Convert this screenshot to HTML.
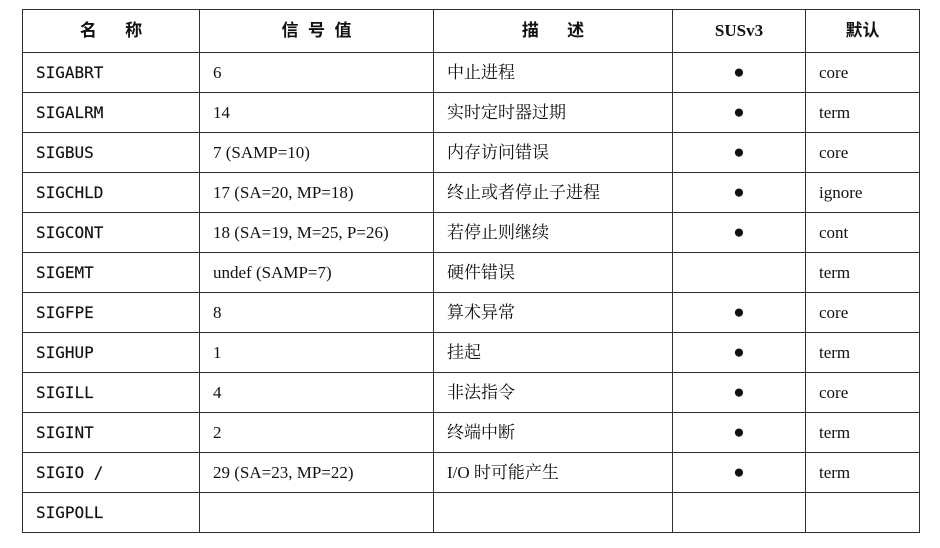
<!DOCTYPE html>
<html><head><meta charset="utf-8"><style>
html,body{margin:0;padding:0;background:#fff;width:940px;height:548px;overflow:hidden}
table{position:absolute;left:22px;top:9px;border-collapse:collapse;table-layout:fixed}
td,th{border:1.5px solid #2e2e2e;height:39px;padding:0 0 0 13px;color:#111;font-size:17px;line-height:20px;white-space:nowrap;overflow:hidden;vertical-align:middle}
th{height:42px;padding:0;text-align:center;font-family:"Liberation Sans","Noto Sans CJK SC",sans-serif;font-weight:bold;font-size:17px}
th.s{font-family:"Liberation Serif",serif}
td.n{font-family:"DejaVu Sans Mono","Liberation Mono",monospace;font-size:16px;-webkit-text-stroke:0.15px #111}
td.v,td.d{font-family:"Liberation Serif","Noto Serif CJK SC",serif}
td.c{text-align:center;padding:0;font-size:19px}
</style></head><body>
<table>
<colgroup><col style="width:177px"><col style="width:234px"><col style="width:239px"><col style="width:133px"><col style="width:114px"></colgroup>
<tr><th>名&nbsp;&nbsp;&nbsp;&nbsp;&nbsp;&nbsp;称</th><th>信&nbsp;&nbsp;号&nbsp;&nbsp;值</th><th>描&nbsp;&nbsp;&nbsp;&nbsp;&nbsp;&nbsp;述</th><th class="s">SUSv3</th><th>默认</th></tr>
<tr><td class="n">SIGABRT</td><td class="v">6</td><td class="d">中止进程</td><td class="c">●</td><td class="v">core</td></tr>
<tr><td class="n">SIGALRM</td><td class="v">14</td><td class="d">实时定时器过期</td><td class="c">●</td><td class="v">term</td></tr>
<tr><td class="n">SIGBUS</td><td class="v">7 (SAMP=10)</td><td class="d">内存访问错误</td><td class="c">●</td><td class="v">core</td></tr>
<tr><td class="n">SIGCHLD</td><td class="v">17 (SA=20, MP=18)</td><td class="d">终止或者停止子进程</td><td class="c">●</td><td class="v">ignore</td></tr>
<tr><td class="n">SIGCONT</td><td class="v">18 (SA=19, M=25, P=26)</td><td class="d">若停止则继续</td><td class="c">●</td><td class="v">cont</td></tr>
<tr><td class="n">SIGEMT</td><td class="v">undef (SAMP=7)</td><td class="d">硬件错误</td><td class="c"></td><td class="v">term</td></tr>
<tr><td class="n">SIGFPE</td><td class="v">8</td><td class="d">算术异常</td><td class="c">●</td><td class="v">core</td></tr>
<tr><td class="n">SIGHUP</td><td class="v">1</td><td class="d">挂起</td><td class="c">●</td><td class="v">term</td></tr>
<tr><td class="n">SIGILL</td><td class="v">4</td><td class="d">非法指令</td><td class="c">●</td><td class="v">core</td></tr>
<tr><td class="n">SIGINT</td><td class="v">2</td><td class="d">终端中断</td><td class="c">●</td><td class="v">term</td></tr>
<tr><td class="n">SIGIO /</td><td class="v">29 (SA=23, MP=22)</td><td class="d">I/O 时可能产生</td><td class="c">●</td><td class="v">term</td></tr>
<tr><td class="n">SIGPOLL</td><td class="v"></td><td class="d"></td><td class="c"></td><td class="v"></td></tr>
</table>
</body></html>
